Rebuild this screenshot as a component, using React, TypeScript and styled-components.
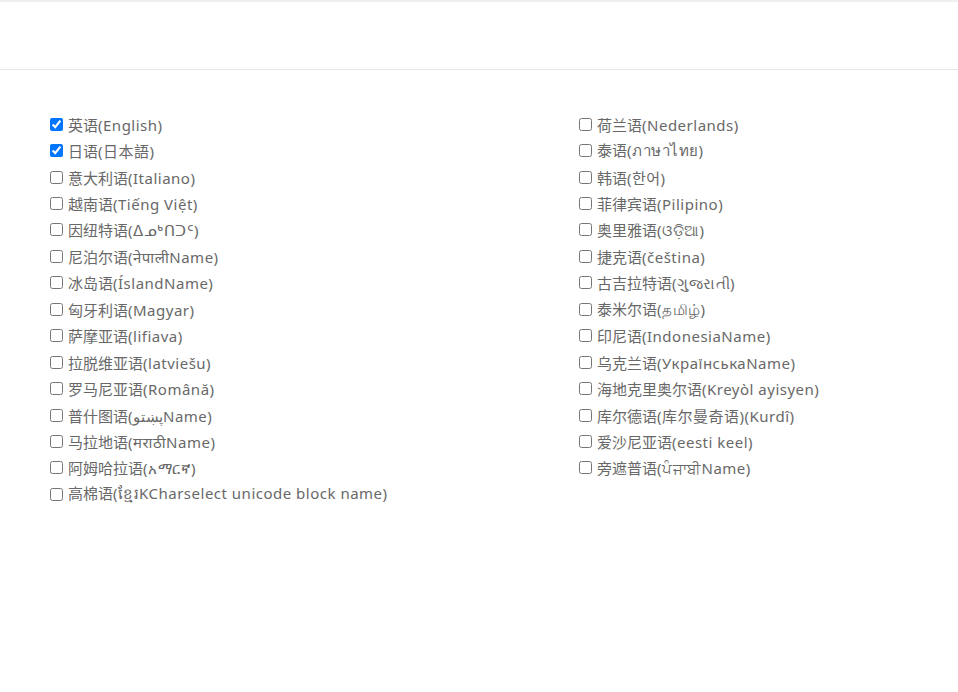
import React, { useState } from 'react';
import styled, { createGlobalStyle } from 'styled-components';

const GlobalStyle = createGlobalStyle`
  html, body {
    margin: 0;
    padding: 0;
    background: #fff;
  }
  body {
    font-family: 'Noto Sans', 'Noto Sans CJK SC', sans-serif;
  }
`;

const LEFT = [
  '英语(English)',
  '日语(日本語)',
  '意大利语(Italiano)',
  '越南语(Tiếng Việt)',
  '因纽特语(ᐃᓄᒃᑎᑐᑦ)',
  '尼泊尔语(नेपालीName)',
  '冰岛语(ÍslandName)',
  '匈牙利语(Magyar)',
  '萨摩亚语(lifiava)',
  '拉脱维亚语(latviešu)',
  '罗马尼亚语(Română)',
  '普什图语(پښتوName)',
  '马拉地语(मराठीName)',
  '阿姆哈拉语(አማርኛ)',
  '高棉语(ខ្មែរKCharselect unicode block name)',
];

const RIGHT = [
  '荷兰语(Nederlands)',
  '泰语(ภาษาไทย)',
  '韩语(한어)',
  '菲律宾语(Pilipino)',
  '奥里雅语(ଓଡ଼ିଆ)',
  '捷克语(čeština)',
  '古吉拉特语(ગુજરાતી)',
  '泰米尔语(தமிழ்)',
  '印尼语(IndonesiaName)',
  '乌克兰语(УкраїнськаName)',
  '海地克里奥尔语(Kreyòl ayisyen)',
  '库尔德语(库尔曼奇语)(Kurdî)',
  '爱沙尼亚语(eesti keel)',
  '旁遮普语(ਪੰਜਾਬੀName)',
];

const LanguageRow: React.FC<{ label: string; checked: boolean; onToggle: () => void }> = ({
  label,
  checked,
  onToggle,
}) => {
  // split "中文名(native)" so the native part can get its own spacing
  const cut = label.indexOf('(');
  const name = label.slice(0, cut);
  const native = label.slice(cut);
  return (
    <Row>
      <Check type="checkbox" checked={checked} onChange={onToggle} />
      <Label>
        {name}
        <Native>{native}</Native>
      </Label>
    </Row>
  );
};

export default function App() {
  const [selected, setSelected] = useState<string[]>(['英语(English)', '日语(日本語)']);

  const toggle = (label: string) => {
    setSelected((prev) =>
      prev.includes(label) ? prev.filter((l) => l !== label) : [...prev, label]
    );
  };

  return (
    <Page>
      <GlobalStyle />
      <TopStrip />
      <Header />
      <Content>
        <Column>
          {LEFT.map((label) => (
            <LanguageRow
              key={label}
              label={label}
              checked={selected.includes(label)}
              onToggle={() => toggle(label)}
            />
          ))}
        </Column>
        <Column>
          {RIGHT.map((label) => (
            <LanguageRow
              key={label}
              label={label}
              checked={selected.includes(label)}
              onToggle={() => toggle(label)}
            />
          ))}
        </Column>
      </Content>
    </Page>
  );
}

const Page = styled.div`
  min-height: 692px;
  background: #fff;
`;

const TopStrip = styled.div`
  height: 2px;
  background: #efefef;
`;

const Header = styled.div`
  height: 67px;
  border-bottom: 1px solid #e8e8e8;
  background: #fff;
`;

const Content = styled.div`
  display: grid;
  grid-template-columns: 529px 1fr;
  padding: 41px 0 0 46px;
`;

const Column = styled.div`
  display: flex;
  flex-direction: column;
`;

const Row = styled.label`
  display: flex;
  align-items: center;
  height: 26.45px;
  cursor: pointer;
`;

const Check = styled.input`
  width: 13px;
  height: 13px;
  margin: 0 5px 0 4px;
  cursor: pointer;
`;

const Label = styled.span`
  font-size: 15px;
  color: #686868;
  white-space: nowrap;
`;

const Native = styled.span`
  letter-spacing: 0.5px;
`;
